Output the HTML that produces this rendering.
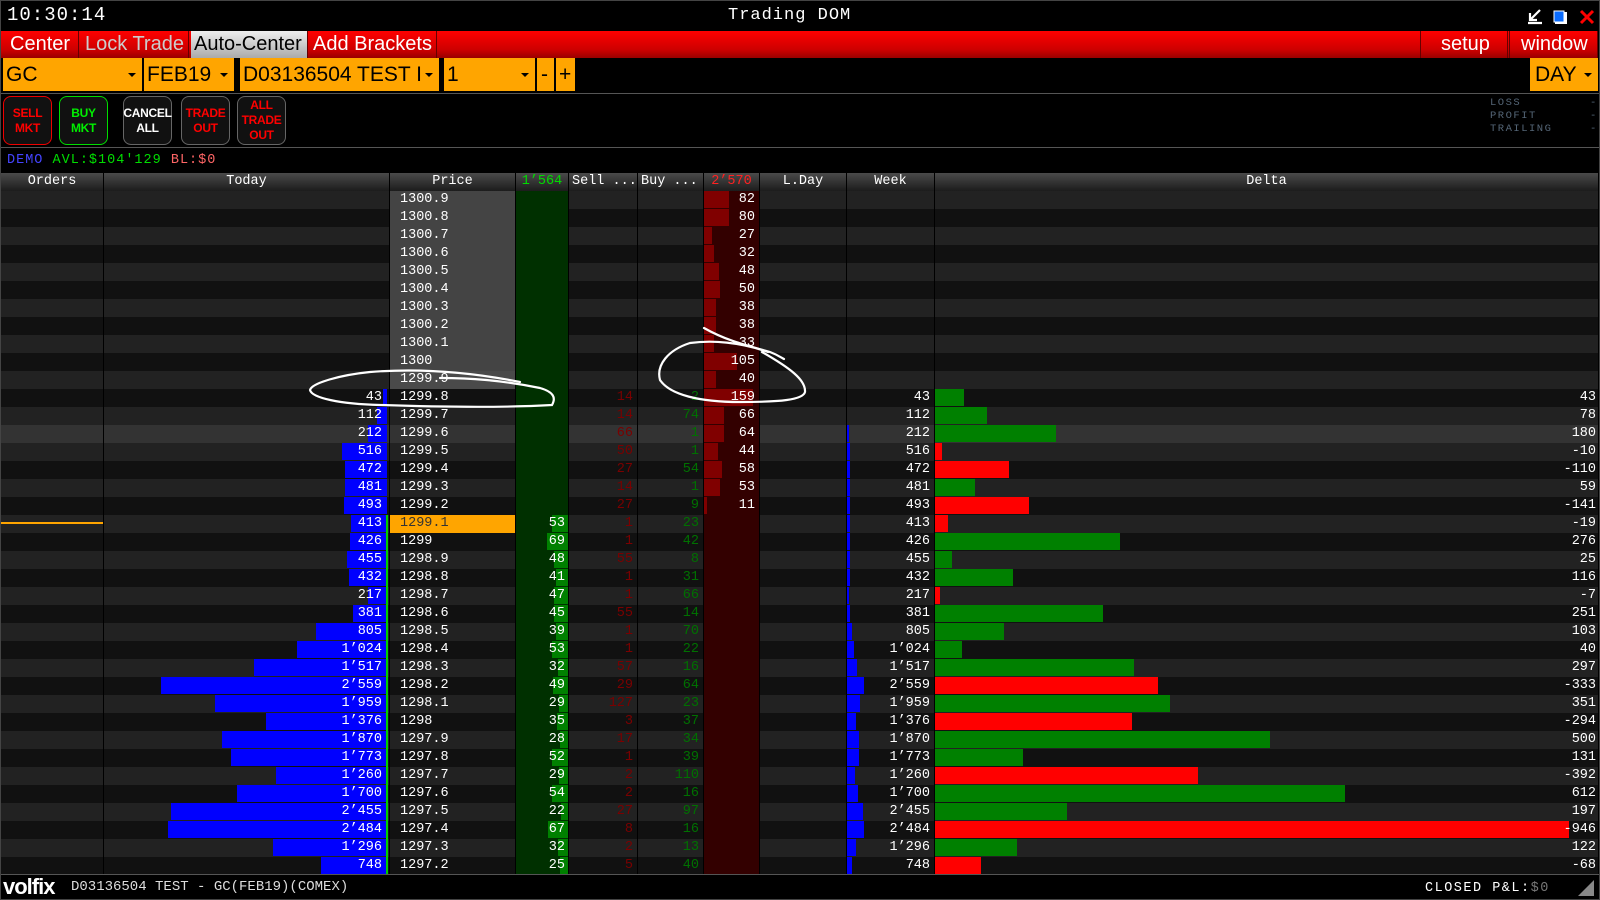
<!DOCTYPE html>
<html><head><meta charset="utf-8"><style>
*{margin:0;padding:0;box-sizing:border-box}
body{width:1600px;height:900px;background:#000;overflow:hidden;position:relative;font-family:"Liberation Mono",monospace;color:#fff}
.a{position:absolute}
.tb{top:31px;height:27px;background:linear-gradient(#f00,#c00 70%,#900);font-family:"Liberation Sans",sans-serif;font-size:20px;line-height:27px;color:#fff;padding-left:7px;border-right:1px solid #600}
.ob{top:58px;height:33px;background:#ffa500;color:#000;font-family:"Liberation Sans",sans-serif;font-size:21px;line-height:33px;padding-left:3px}
.ob i{position:absolute;right:6px;top:15px;border-left:4px solid transparent;border-right:4px solid transparent;border-top:4px solid #000}
.bt{top:96px;height:49px;width:49px;border:1px solid #666;border-radius:8px;background:#111;font-family:"Liberation Sans",sans-serif;font-weight:bold;font-size:12px;line-height:15px;text-align:center;display:flex;align-items:center;justify-content:center;letter-spacing:-0.3px}
.hd{top:173px;height:18px;background:linear-gradient(#4a4a4a,#1c1c1c);font-size:13.5px;line-height:18px;text-align:center;border-left:1px solid #000}
#g{position:absolute;top:191px;left:0;width:1598px}
.r{position:relative;height:18px;background:#111;font-size:13.5px;line-height:18px}
.r:nth-child(odd){background:#222}
.r.h{background:#333}
.r>span{position:absolute;top:0;height:18px;border-left:1px solid #000}
.o{left:0;width:103px}
.t{left:103px;width:284px;text-align:right;padding-right:5px}
.t b,.g b,.w b,.d b,.x b{position:absolute;top:0;height:17px;font-weight:normal}
.t b{right:0;background:#00f}
.t u,.g u,.x u,.w u,.d u{position:relative;text-decoration:none}
.p{left:389px;width:126px;padding-left:10px}
.p.gr{background:#444}
.p.cur{background:#ffa500;color:#333}
.g{left:515px;width:53px;background:#003000;text-align:right;padding-right:3px}
.g b{right:0;background:#008000}
.s{left:568px;width:69px;text-align:right;padding-right:4px;color:#7a0000}
.b{left:637px;width:66px;text-align:right;padding-right:4px;color:#007000}
.x{left:703px;width:56px;background:#300;text-align:right;padding-right:4px}
.x b{left:0;background:#800000}
.l{left:759px;width:87px}
.w{left:846px;width:88px;text-align:right;padding-right:4px}
.w b{left:0;background:#00f}
.d{left:934px;width:664px;text-align:right;padding-right:2px}
.d b{left:0}
.gn{background:#008000}.rd{background:#f00}
.gl{position:absolute;left:386px;top:515px;width:2px;height:360px;background:#0c0}
</style></head><body>
<div class="a" style="left:0;top:0;width:1600px;height:900px;border:1px solid #444;pointer-events:none;z-index:9"></div>
<div class="a" style="left:7px;top:4px;font-size:19px;line-height:22px;letter-spacing:1px">10:30:14</div>
<div class="a" style="left:728px;top:5px;font-size:17px;line-height:22px;letter-spacing:1px">Trading DOM</div>
<svg class="a" style="left:1526px;top:8px" width="72" height="18" viewBox="0 0 72 18">
<path d="M14 2 L5 11 M4 5 V12 H11 M2 15 H16" stroke="#fff" stroke-width="2.2" fill="none"/>
<rect x="29" y="4" width="12" height="12" fill="#fff"/><rect x="28" y="3" width="10" height="11" fill="#0a6cff" stroke="#fff" stroke-width="1"/>
<path d="M55 3 L67 15 M67 3 L55 15" stroke="#f00" stroke-width="3"/>
</svg>
<div class="a" style="left:0;top:31px;width:1598px;height:27px;background:linear-gradient(#f00,#c00 70%,#900)"></div>
<div class="a tb" style="left:3px;width:76px">Center</div>
<div class="a tb" style="left:81px;width:108px;color:#ccc;padding-left:4px">Lock Trade</div>
<div class="a tb" style="left:191px;width:117px;background:linear-gradient(#eee,#aaa);color:#000;padding-left:3px">Auto-Center</div>
<div class="a tb" style="left:310px;width:127px;padding-left:3px">Add Brackets</div>
<div class="a tb" style="left:1420px;width:88px;border-left:1px solid #600;padding-left:20px">setup</div>
<div class="a tb" style="left:1509px;width:89px;border-left:1px solid #600;padding-left:11px">window</div>
<div class="a ob" style="left:3px;width:139px">GC<i></i></div>
<div class="a ob" style="left:144px;width:90px">FEB19<i></i></div>
<div class="a ob" style="left:240px;width:199px">D03136504 TEST I<i></i></div>
<div class="a ob" style="left:444px;width:91px">1<i></i></div>
<div class="a ob" style="left:537px;width:17px;padding-left:4px">-</div>
<div class="a ob" style="left:556px;width:19px;padding-left:3px">+</div>
<div class="a ob" style="left:1530px;width:68px;padding-left:5px">DAY<i></i></div>
<div class="a" style="left:0;top:93px;width:1600px;height:1px;background:#555"></div>
<div class="a bt" style="left:3px;border-color:#e00;color:#f00">SELL<br>MKT</div>
<div class="a bt" style="left:59px;border-color:#0d0;color:#0e0">BUY<br>MKT</div>
<div class="a bt" style="left:123px;color:#fff">CANCEL<br>ALL</div>
<div class="a bt" style="left:181px;color:#f00">TRADE<br>OUT</div>
<div class="a bt" style="left:237px;color:#f00">ALL<br>TRADE<br>OUT</div>
<div class="a" style="left:1490px;top:97px;font-size:10.5px;line-height:13px;color:#567;letter-spacing:1.5px">LOSS<br>PROFIT<br>TRAILING</div>
<div class="a" style="left:1590px;top:97px;font-size:10.5px;line-height:13px;color:#567">-<br>-<br>-</div>
<div class="a" style="left:0;top:147px;width:1600px;height:1px;background:#555"></div>
<div class="a" style="left:7px;top:152px;font-size:13.5px;line-height:18px;letter-spacing:1px"><span style="color:#44f">DEMO</span> <span style="color:#0d0">AVL:$104'129</span> <span style="color:#f66">BL:$0</span></div>
<div class="a hd" style="left:0;width:103px">Orders</div>
<div class="a hd" style="left:103px;width:286px">Today</div>
<div class="a hd" style="left:389px;width:126px">Price</div>
<div class="a hd" style="left:515px;width:53px;color:#0d0">1’564</div>
<div class="a hd" style="left:568px;width:69px;text-align:left;padding-left:3px">Sell ...</div>
<div class="a hd" style="left:637px;width:66px;text-align:left;padding-left:3px">Buy ...</div>
<div class="a hd" style="left:703px;width:56px;color:#f22">2’570</div>
<div class="a hd" style="left:759px;width:87px">L.Day</div>
<div class="a hd" style="left:846px;width:88px">Week</div>
<div class="a hd" style="left:934px;width:664px">Delta</div>
<div id="g">
<div class="r"><span class="o"></span><span class="t"></span><span class="p gr">1300.9</span><span class="g"></span><span class="s"></span><span class="b"></span><span class="x"><b style="width:25px"></b><u>82</u></span><span class="l"></span><span class="w"></span><span class="d"></span></div>
<div class="r"><span class="o"></span><span class="t"></span><span class="p gr">1300.8</span><span class="g"></span><span class="s"></span><span class="b"></span><span class="x"><b style="width:25px"></b><u>80</u></span><span class="l"></span><span class="w"></span><span class="d"></span></div>
<div class="r"><span class="o"></span><span class="t"></span><span class="p gr">1300.7</span><span class="g"></span><span class="s"></span><span class="b"></span><span class="x"><b style="width:8px"></b><u>27</u></span><span class="l"></span><span class="w"></span><span class="d"></span></div>
<div class="r"><span class="o"></span><span class="t"></span><span class="p gr">1300.6</span><span class="g"></span><span class="s"></span><span class="b"></span><span class="x"><b style="width:10px"></b><u>32</u></span><span class="l"></span><span class="w"></span><span class="d"></span></div>
<div class="r"><span class="o"></span><span class="t"></span><span class="p gr">1300.5</span><span class="g"></span><span class="s"></span><span class="b"></span><span class="x"><b style="width:15px"></b><u>48</u></span><span class="l"></span><span class="w"></span><span class="d"></span></div>
<div class="r"><span class="o"></span><span class="t"></span><span class="p gr">1300.4</span><span class="g"></span><span class="s"></span><span class="b"></span><span class="x"><b style="width:16px"></b><u>50</u></span><span class="l"></span><span class="w"></span><span class="d"></span></div>
<div class="r"><span class="o"></span><span class="t"></span><span class="p gr">1300.3</span><span class="g"></span><span class="s"></span><span class="b"></span><span class="x"><b style="width:12px"></b><u>38</u></span><span class="l"></span><span class="w"></span><span class="d"></span></div>
<div class="r"><span class="o"></span><span class="t"></span><span class="p gr">1300.2</span><span class="g"></span><span class="s"></span><span class="b"></span><span class="x"><b style="width:12px"></b><u>38</u></span><span class="l"></span><span class="w"></span><span class="d"></span></div>
<div class="r"><span class="o"></span><span class="t"></span><span class="p gr">1300.1</span><span class="g"></span><span class="s"></span><span class="b"></span><span class="x"><b style="width:10px"></b><u>33</u></span><span class="l"></span><span class="w"></span><span class="d"></span></div>
<div class="r"><span class="o"></span><span class="t"></span><span class="p gr">1300</span><span class="g"></span><span class="s"></span><span class="b"></span><span class="x"><b style="width:33px"></b><u>105</u></span><span class="l"></span><span class="w"></span><span class="d"></span></div>
<div class="r"><span class="o"></span><span class="t"></span><span class="p gr" style="background:#4a4a4a">1299.9</span><span class="g"></span><span class="s"></span><span class="b"></span><span class="x"><b style="width:12px"></b><u>40</u></span><span class="l"></span><span class="w"></span><span class="d"></span></div>
<div class="r"><span class="o"></span><span class="t"><b style="width:4px"></b><u>43</u></span><span class="p">1299.8</span><span class="g"></span><span class="s">14</span><span class="b">2</span><span class="x"><b style="width:49px"></b><u>159</u></span><span class="l"></span><span class="w"><u>43</u></span><span class="d"><b class="gn" style="width:29px"></b><u>43</u></span></div>
<div class="r"><span class="o"></span><span class="t"><b style="width:10px"></b><u>112</u></span><span class="p">1299.7</span><span class="g"></span><span class="s">14</span><span class="b">74</span><span class="x"><b style="width:20px"></b><u>66</u></span><span class="l"></span><span class="w"><u>112</u></span><span class="d"><b class="gn" style="width:52px"></b><u>78</u></span></div>
<div class="r h"><span class="o"></span><span class="t"><b style="width:19px"></b><u>212</u></span><span class="p">1299.6</span><span class="g"></span><span class="s">66</span><span class="b">1</span><span class="x"><b style="width:20px"></b><u>64</u></span><span class="l"></span><span class="w"><b style="width:2px"></b><u>212</u></span><span class="d"><b class="gn" style="width:121px"></b><u>180</u></span></div>
<div class="r"><span class="o"></span><span class="t"><b style="width:45px"></b><u>516</u></span><span class="p">1299.5</span><span class="g"></span><span class="s">50</span><span class="b">1</span><span class="x"><b style="width:14px"></b><u>44</u></span><span class="l"></span><span class="w"><b style="width:3px"></b><u>516</u></span><span class="d"><b class="rd" style="width:7px"></b><u>-10</u></span></div>
<div class="r"><span class="o"></span><span class="t"><b style="width:42px"></b><u>472</u></span><span class="p">1299.4</span><span class="g"></span><span class="s">27</span><span class="b">54</span><span class="x"><b style="width:18px"></b><u>58</u></span><span class="l"></span><span class="w"><b style="width:3px"></b><u>472</u></span><span class="d"><b class="rd" style="width:74px"></b><u>-110</u></span></div>
<div class="r"><span class="o"></span><span class="t"><b style="width:42px"></b><u>481</u></span><span class="p">1299.3</span><span class="g"></span><span class="s">14</span><span class="b">1</span><span class="x"><b style="width:16px"></b><u>53</u></span><span class="l"></span><span class="w"><b style="width:3px"></b><u>481</u></span><span class="d"><b class="gn" style="width:40px"></b><u>59</u></span></div>
<div class="r"><span class="o"></span><span class="t"><b style="width:43px"></b><u>493</u></span><span class="p">1299.2</span><span class="g"></span><span class="s">27</span><span class="b">9</span><span class="x"><b style="width:3px"></b><u>11</u></span><span class="l"></span><span class="w"><b style="width:3px"></b><u>493</u></span><span class="d"><b class="rd" style="width:94px"></b><u>-141</u></span></div>
<div class="r"><span class="o"><i style="position:absolute;left:0;top:7px;width:102px;height:2px;background:#ffa500"></i></span><span class="t"><b style="width:36px"></b><u>413</u></span><span class="p cur">1299.1</span><span class="g"><b style="width:16px"></b><u>53</u></span><span class="s">1</span><span class="b">23</span><span class="x"></span><span class="l"></span><span class="w"><b style="width:3px"></b><u>413</u></span><span class="d"><b class="rd" style="width:13px"></b><u>-19</u></span></div>
<div class="r"><span class="o"></span><span class="t"><b style="width:37px"></b><u>426</u></span><span class="p">1299</span><span class="g"><b style="width:21px"></b><u>69</u></span><span class="s">1</span><span class="b">42</span><span class="x"></span><span class="l"></span><span class="w"><b style="width:3px"></b><u>426</u></span><span class="d"><b class="gn" style="width:185px"></b><u>276</u></span></div>
<div class="r"><span class="o"></span><span class="t"><b style="width:40px"></b><u>455</u></span><span class="p">1298.9</span><span class="g"><b style="width:14px"></b><u>48</u></span><span class="s">55</span><span class="b">8</span><span class="x"></span><span class="l"></span><span class="w"><b style="width:3px"></b><u>455</u></span><span class="d"><b class="gn" style="width:17px"></b><u>25</u></span></div>
<div class="r"><span class="o"></span><span class="t"><b style="width:38px"></b><u>432</u></span><span class="p">1298.8</span><span class="g"><b style="width:12px"></b><u>41</u></span><span class="s">1</span><span class="b">31</span><span class="x"></span><span class="l"></span><span class="w"><b style="width:3px"></b><u>432</u></span><span class="d"><b class="gn" style="width:78px"></b><u>116</u></span></div>
<div class="r"><span class="o"></span><span class="t"><b style="width:19px"></b><u>217</u></span><span class="p">1298.7</span><span class="g"><b style="width:14px"></b><u>47</u></span><span class="s">1</span><span class="b">66</span><span class="x"></span><span class="l"></span><span class="w"><b style="width:2px"></b><u>217</u></span><span class="d"><b class="rd" style="width:5px"></b><u>-7</u></span></div>
<div class="r"><span class="o"></span><span class="t"><b style="width:34px"></b><u>381</u></span><span class="p">1298.6</span><span class="g"><b style="width:14px"></b><u>45</u></span><span class="s">55</span><span class="b">14</span><span class="x"></span><span class="l"></span><span class="w"><b style="width:3px"></b><u>381</u></span><span class="d"><b class="gn" style="width:168px"></b><u>251</u></span></div>
<div class="r"><span class="o"></span><span class="t"><b style="width:71px"></b><u>805</u></span><span class="p">1298.5</span><span class="g"><b style="width:12px"></b><u>39</u></span><span class="s">1</span><span class="b">70</span><span class="x"></span><span class="l"></span><span class="w"><b style="width:5px"></b><u>805</u></span><span class="d"><b class="gn" style="width:69px"></b><u>103</u></span></div>
<div class="r"><span class="o"></span><span class="t"><b style="width:90px"></b><u>1’024</u></span><span class="p">1298.4</span><span class="g"><b style="width:16px"></b><u>53</u></span><span class="s">1</span><span class="b">22</span><span class="x"></span><span class="l"></span><span class="w"><b style="width:7px"></b><u>1’024</u></span><span class="d"><b class="gn" style="width:27px"></b><u>40</u></span></div>
<div class="r"><span class="o"></span><span class="t"><b style="width:133px"></b><u>1’517</u></span><span class="p">1298.3</span><span class="g"><b style="width:10px"></b><u>32</u></span><span class="s">57</span><span class="b">16</span><span class="x"></span><span class="l"></span><span class="w"><b style="width:10px"></b><u>1’517</u></span><span class="d"><b class="gn" style="width:199px"></b><u>297</u></span></div>
<div class="r"><span class="o"></span><span class="t"><b style="width:226px"></b><u>2’559</u></span><span class="p">1298.2</span><span class="g"><b style="width:15px"></b><u>49</u></span><span class="s">29</span><span class="b">64</span><span class="x"></span><span class="l"></span><span class="w"><b style="width:17px"></b><u>2’559</u></span><span class="d"><b class="rd" style="width:223px"></b><u>-333</u></span></div>
<div class="r"><span class="o"></span><span class="t"><b style="width:172px"></b><u>1’959</u></span><span class="p">1298.1</span><span class="g"><b style="width:9px"></b><u>29</u></span><span class="s">127</span><span class="b">23</span><span class="x"></span><span class="l"></span><span class="w"><b style="width:13px"></b><u>1’959</u></span><span class="d"><b class="gn" style="width:235px"></b><u>351</u></span></div>
<div class="r"><span class="o"></span><span class="t"><b style="width:121px"></b><u>1’376</u></span><span class="p">1298</span><span class="g"><b style="width:11px"></b><u>35</u></span><span class="s">3</span><span class="b">37</span><span class="x"></span><span class="l"></span><span class="w"><b style="width:9px"></b><u>1’376</u></span><span class="d"><b class="rd" style="width:197px"></b><u>-294</u></span></div>
<div class="r"><span class="o"></span><span class="t"><b style="width:165px"></b><u>1’870</u></span><span class="p">1297.9</span><span class="g"><b style="width:8px"></b><u>28</u></span><span class="s">17</span><span class="b">34</span><span class="x"></span><span class="l"></span><span class="w"><b style="width:12px"></b><u>1’870</u></span><span class="d"><b class="gn" style="width:335px"></b><u>500</u></span></div>
<div class="r"><span class="o"></span><span class="t"><b style="width:156px"></b><u>1’773</u></span><span class="p">1297.8</span><span class="g"><b style="width:16px"></b><u>52</u></span><span class="s">1</span><span class="b">39</span><span class="x"></span><span class="l"></span><span class="w"><b style="width:12px"></b><u>1’773</u></span><span class="d"><b class="gn" style="width:88px"></b><u>131</u></span></div>
<div class="r"><span class="o"></span><span class="t"><b style="width:111px"></b><u>1’260</u></span><span class="p">1297.7</span><span class="g"><b style="width:9px"></b><u>29</u></span><span class="s">2</span><span class="b">110</span><span class="x"></span><span class="l"></span><span class="w"><b style="width:8px"></b><u>1’260</u></span><span class="d"><b class="rd" style="width:263px"></b><u>-392</u></span></div>
<div class="r"><span class="o"></span><span class="t"><b style="width:150px"></b><u>1’700</u></span><span class="p">1297.6</span><span class="g"><b style="width:16px"></b><u>54</u></span><span class="s">2</span><span class="b">16</span><span class="x"></span><span class="l"></span><span class="w"><b style="width:11px"></b><u>1’700</u></span><span class="d"><b class="gn" style="width:410px"></b><u>612</u></span></div>
<div class="r"><span class="o"></span><span class="t"><b style="width:216px"></b><u>2’455</u></span><span class="p">1297.5</span><span class="g"><b style="width:7px"></b><u>22</u></span><span class="s">27</span><span class="b">97</span><span class="x"></span><span class="l"></span><span class="w"><b style="width:16px"></b><u>2’455</u></span><span class="d"><b class="gn" style="width:132px"></b><u>197</u></span></div>
<div class="r"><span class="o"></span><span class="t"><b style="width:219px"></b><u>2’484</u></span><span class="p">1297.4</span><span class="g"><b style="width:20px"></b><u>67</u></span><span class="s">8</span><span class="b">16</span><span class="x"></span><span class="l"></span><span class="w"><b style="width:17px"></b><u>2’484</u></span><span class="d"><b class="rd" style="width:634px"></b><u>-946</u></span></div>
<div class="r"><span class="o"></span><span class="t"><b style="width:114px"></b><u>1’296</u></span><span class="p">1297.3</span><span class="g"><b style="width:10px"></b><u>32</u></span><span class="s">2</span><span class="b">13</span><span class="x"></span><span class="l"></span><span class="w"><b style="width:9px"></b><u>1’296</u></span><span class="d"><b class="gn" style="width:82px"></b><u>122</u></span></div>
<div class="r"><span class="o"></span><span class="t"><b style="width:66px"></b><u>748</u></span><span class="p">1297.2</span><span class="g"><b style="width:8px"></b><u>25</u></span><span class="s">5</span><span class="b">40</span><span class="x"></span><span class="l"></span><span class="w"><b style="width:5px"></b><u>748</u></span><span class="d"><b class="rd" style="width:46px"></b><u>-68</u></span></div>
</div>
<div class="gl"></div>
<svg class="a" style="left:0;top:0" width="1600" height="900" fill="none" stroke="#fff" stroke-width="2.2" stroke-linecap="round">
<path d="M520 382 C470 372 420 368 370 372 C340 375 312 383 310 390 C312 398 340 404 380 405 C440 407 500 408 552 405 C556 398 554 392 540 388 C500 380 470 378 440 378"/>
<path d="M704 328 C725 340 745 345 770 352 C778 355 782 358 784 359 M768 352 C740 342 712 340 690 343 C668 350 656 365 660 380 C670 395 700 402 740 402 C780 402 803 400 805 392 C806 380 790 368 762 352"/>
</svg>
<div class="a" style="left:0;top:874px;width:1600px;height:1px;background:#555"></div>
<div class="a" style="left:3px;top:875px;font-family:'Liberation Sans',sans-serif;font-weight:bold;font-size:22px;line-height:24px;letter-spacing:-1px">volfix</div>
<div class="a" style="left:71px;top:878px;font-size:14px;line-height:18px;color:#ddd">D03136504 TEST - GC(FEB19)(COMEX)</div>
<div class="a" style="left:1425px;top:880px;font-size:13.5px;line-height:18px;letter-spacing:1.5px">CLOSED P&amp;L:<span style="color:#777">$0</span></div>
<svg class="a" style="left:1578px;top:880px" width="16" height="16"><path d="M16 0 L16 16 L0 16 Z" fill="#888"/></svg>
</body></html>
